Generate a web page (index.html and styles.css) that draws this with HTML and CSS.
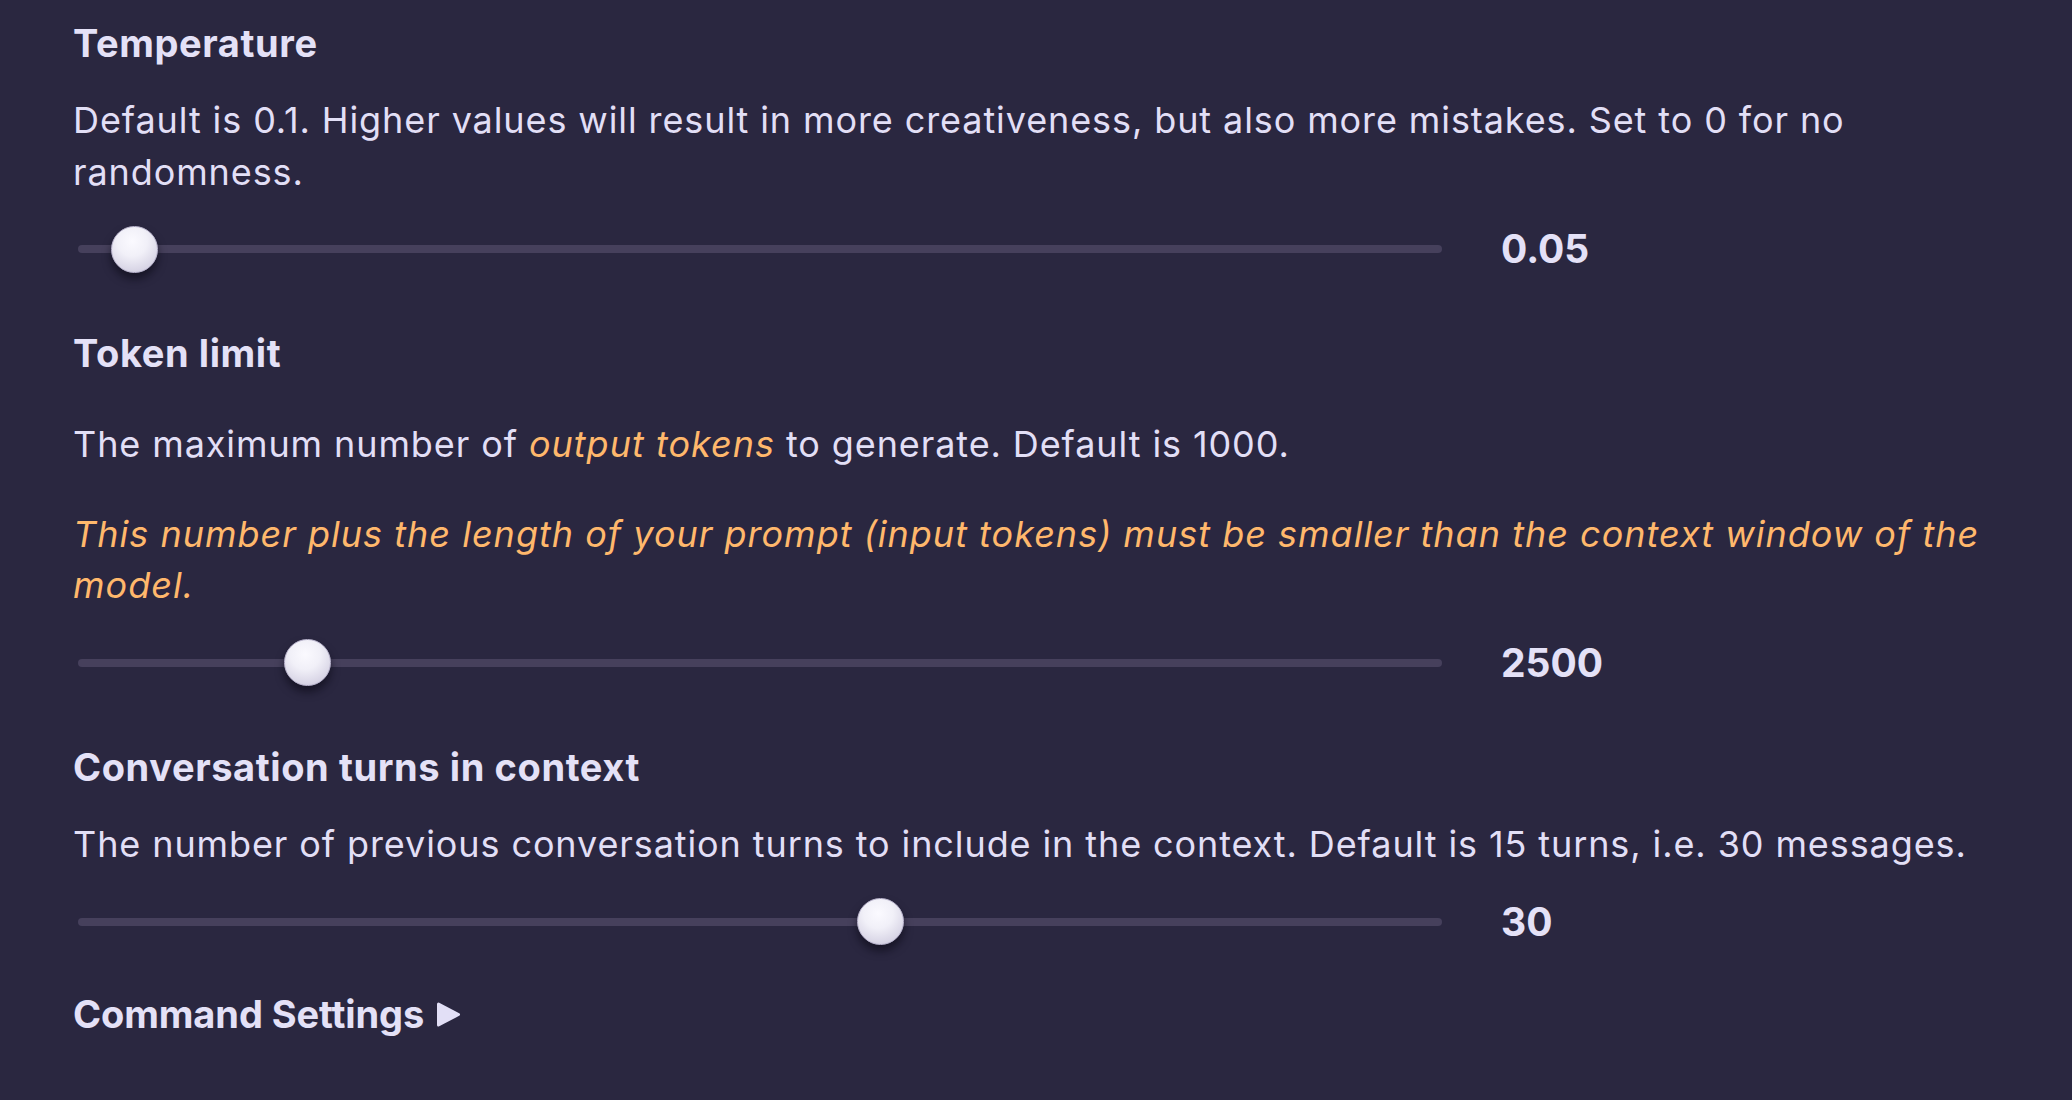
FILE: index.html
```html
<!DOCTYPE html>
<html lang="en">
<head>
<meta charset="utf-8">
<title>Settings</title>
<link rel="stylesheet" href="styles.css">
</head>
<body>
<main class="settings">
  <section class="setting">
    <h3 class="setting-title">Temperature</h3>
    <div class="desc">
      <p>Default is 0.1. Higher values will result in more creativeness, but also more mistakes. Set to 0 for no randomness.</p>
    </div>
    <div class="slider-row">
      <input class="range" type="range" min="0" max="2" step="0.05" value="0.05">
      <span class="value">0.05</span>
    </div>
  </section>

  <section class="setting">
    <h3 class="setting-title">Token limit</h3>
    <div class="desc spaced">
      <p>The maximum number of <em class="accent">output tokens</em> to generate. Default is 1000.</p>
      <p class="warning">This number plus the length of your prompt (input tokens) must be smaller than the context window of the model.</p>
    </div>
    <div class="slider-row">
      <input class="range" type="range" min="0" max="16000" step="100" value="2500">
      <span class="value">2500</span>
    </div>
  </section>

  <section class="setting last">
    <h3 class="setting-title">Conversation turns in context</h3>
    <div class="desc">
      <p>The number of previous conversation turns to include in the context. Default is 15 turns, i.e. 30 messages.</p>
    </div>
    <div class="slider-row">
      <input class="range" type="range" min="1" max="50" step="1" value="30">
      <span class="value">30</span>
    </div>
  </section>

  <details class="more">
    <summary class="setting-title summary">Command Settings<svg class="caret" width="25" height="27" viewBox="0 0 25 27" aria-hidden="true"><path d="M2.5 3 L22.5 13.5 L2.5 24 Z" fill="#e2dff6" stroke="#e2dff6" stroke-width="3" stroke-linejoin="round"/></svg></summary>
  </details>
</main>
</body>
</html>
```

FILE: styles.css
```css
html, body {
  margin: 0;
  padding: 0;
  background: #2a2740;
}

body {
  font-family: Inter, "Noto Sans", "Liberation Sans", sans-serif;
  color: #e2dff6;
  width: 2072px;
  height: 1100px;
  overflow: hidden;
}

.settings {
  padding: 21px 73px 0 73px;
}

.setting {
  margin-bottom: 58px;
}

.setting.last {
  margin-bottom: 46px;
}

.setting-title {
  margin: 0 0 29px 0;
  font-size: 38px;
  letter-spacing: 0.6px;
  line-height: 45px;
  font-weight: 700;
  color: #e4e1f7;
}

.desc {
  font-size: 36px;
  letter-spacing: 0.9px;
  line-height: 51.6px;
}

.desc.spaced {
  padding-top: 14px;
}

.desc p {
  margin: 0;
}

.desc p + p {
  margin-top: 38px;
}

.accent,
.warning {
  font-style: italic;
  color: #ffb86c;
  letter-spacing: 1px;
}

.slider-row {
  margin-top: 27px;
  height: 48px;
  padding-left: 5px;
  display: flex;
  align-items: center;
}

.range {
  -webkit-appearance: none;
  appearance: none;
  width: 1364px;
  height: 48px;
  margin: 0;
  padding: 0;
  background: transparent;
}

.range::-webkit-slider-runnable-track {
  height: 8px;
  border-radius: 4px;
  background: #46405c;
}

.range::-webkit-slider-thumb {
  -webkit-appearance: none;
  appearance: none;
  width: 47px;
  height: 47px;
  margin-top: -19.5px;
  border-radius: 50%;
  border: 1px solid #bdb8d0;
  box-sizing: border-box;
  background: radial-gradient(circle at 45% 32%, #fbfaff 0%, #f1f0f8 38%, #dad7e7 72%, #c2bed5 100%);
  box-shadow: 0 6px 8px rgba(10, 8, 20, 0.6);
}

.value {
  margin-left: 59px;
  font-size: 39px;
  font-weight: 700;
  line-height: 48px;
  color: #e4e1f7;
}

.more {
  margin: 0;
}

.summary {
  list-style: none;
  cursor: pointer;
  margin: 0;
  letter-spacing: -0.1px;
}

.summary::-webkit-details-marker {
  display: none;
}

.caret {
  margin-left: 12px;
  vertical-align: baseline;
}
```
